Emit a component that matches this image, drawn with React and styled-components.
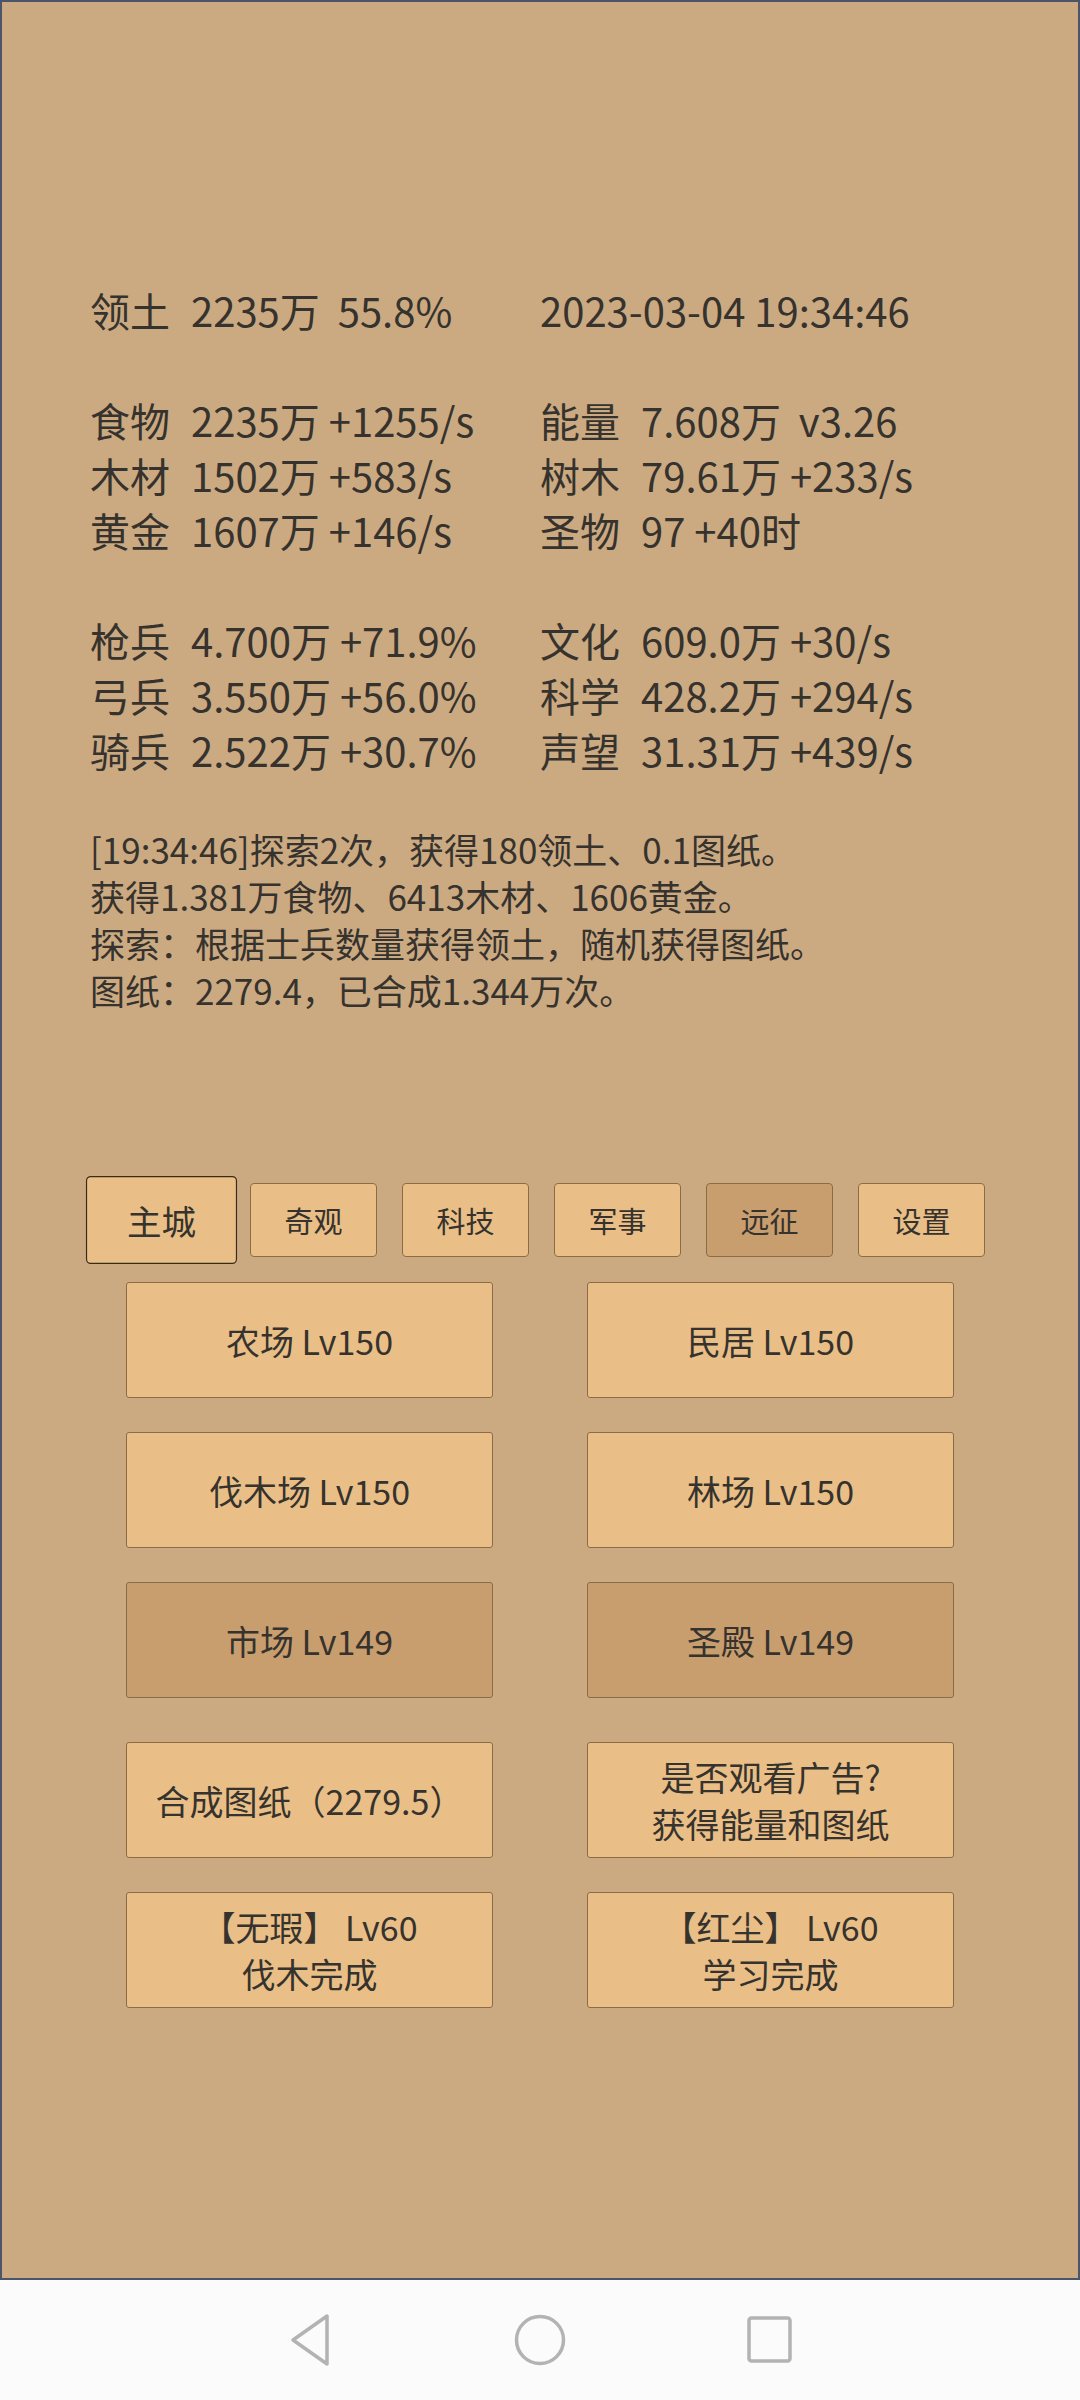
import React from 'react';
import styled, { createGlobalStyle } from 'styled-components';

const GlobalStyle = createGlobalStyle`
  html, body {
    margin: 0;
    padding: 0;
    background: #fbfbfb;
  }
  body {
    font-family: "Noto Sans CJK SC", "Noto Sans", sans-serif;
    color: #36322d;
  }
`;

const statRows = [
  [{ label: '领土', value: '2235万  55.8%' }, { value: '2023-03-04 19:34:46' }],
  null,
  [{ label: '食物', value: '2235万 +1255/s' }, { label: '能量', value: '7.608万  v3.26' }],
  [{ label: '木材', value: '1502万 +583/s' }, { label: '树木', value: '79.61万 +233/s' }],
  [{ label: '黄金', value: '1607万 +146/s' }, { label: '圣物', value: '97 +40时' }],
  null,
  [{ label: '枪兵', value: '4.700万 +71.9%' }, { label: '文化', value: '609.0万 +30/s' }],
  [{ label: '弓兵', value: '3.550万 +56.0%' }, { label: '科学', value: '428.2万 +294/s' }],
  [{ label: '骑兵', value: '2.522万 +30.7%' }, { label: '声望', value: '31.31万 +439/s' }],
];

const logLines = [
  '[19:34:46]探索2次，获得180领土、0.1图纸。',
  '获得1.381万食物、6413木材、1606黄金。',
  '探索：根据士兵数量获得领土，随机获得图纸。',
  '图纸：2279.4，已合成1.344万次。',
];

const tabs = [
  { name: '主城', active: true },
  { name: '奇观' },
  { name: '科技' },
  { name: '军事' },
  { name: '远征', dim: true },
  { name: '设置' },
];

const buildings = [
  { text: '农场 Lv150' },
  { text: '民居 Lv150' },
  { text: '伐木场 Lv150' },
  { text: '林场 Lv150' },
  { text: '市场 Lv149', dim: true },
  { text: '圣殿 Lv149', dim: true },
];

const actions = [
  { lines: ['合成图纸（2279.5）'] },
  { lines: ['是否观看广告?', '获得能量和图纸'] },
  { lines: ['【无瑕】 Lv60', '伐木完成'] },
  { lines: ['【红尘】 Lv60', '学习完成'] },
];

const App = () => {
  return (
    <>
      <GlobalStyle />
      <Screen>
        <Frame>
          <Stats>
            {statRows.map((row, i) =>
              row ? (
                row.map((cell, j) => (
                  <StatCell key={`${i}-${j}`}>
                    {cell.label && <Label>{cell.label}</Label>}
                    <Value>{cell.value}</Value>
                  </StatCell>
                ))
              ) : (
                <Blank key={i} />
              )
            )}
          </Stats>

          <Log>
            {logLines.map((line) => (
              <div key={line}>{line}</div>
            ))}
          </Log>

          <TabBar>
            {tabs.map((tab) => (
              <Tab key={tab.name} $active={tab.active} $dim={tab.dim}>
                {tab.name}
              </Tab>
            ))}
          </TabBar>

          <ButtonGrid>
            {buildings.map((b) => (
              <GameButton key={b.text} $dim={b.dim}>
                {b.text}
              </GameButton>
            ))}
          </ButtonGrid>

          <ButtonGrid $extra>
            {actions.map((a) => (
              <GameButton key={a.lines.join()}>
                {a.lines.map((l) => (
                  <span key={l}>{l}</span>
                ))}
              </GameButton>
            ))}
          </ButtonGrid>
        </Frame>

        <NavBar>
          <NavSlot>
            <svg width="46" height="56" viewBox="0 0 46 56">
              <path
                d="M40 4 L40 52 L6 28 Z"
                fill="none"
                stroke="#b3b3b3"
                strokeWidth="3.5"
                strokeLinejoin="round"
              />
            </svg>
          </NavSlot>
          <NavSlot>
            <svg width="54" height="54" viewBox="0 0 54 54">
              <circle cx="27" cy="27" r="23.5" fill="none" stroke="#b3b3b3" strokeWidth="3.5" />
            </svg>
          </NavSlot>
          <NavSlot>
            <svg width="48" height="50" viewBox="0 0 48 50">
              <rect x="3" y="3" width="41" height="43" rx="2.5" fill="none" stroke="#b3b3b3" strokeWidth="3.5" />
            </svg>
          </NavSlot>
        </NavBar>
      </Screen>
    </>
  );
};

export default App;

const Screen = styled.div`
  width: 1080px;
  height: 2400px;
  display: flex;
  flex-direction: column;
`;

const Frame = styled.div`
  box-sizing: border-box;
  height: 2280px;
  background: #cbaa82;
  border: 2px solid #4b5468;
  display: flex;
  flex-direction: column;
`;

const Stats = styled.div`
  display: grid;
  grid-template-columns: 450px 1fr;
  margin: 281px 0 0 88px;
  font-size: 40px;
  line-height: 55px;
`;

const StatCell = styled.div`
  display: flex;
  white-space: pre;
`;

const Blank = styled.div`
  grid-column: 1 / -1;
  height: 55px;
`;

const Label = styled.span`
  width: 80px;
  margin-right: 21px;
  flex-shrink: 0;
`;

const Value = styled.span``;

const Log = styled.div`
  margin: 47px 0 0 88px;
  font-size: 35px;
  line-height: 47px;
`;

const TabBar = styled.div`
  display: flex;
  align-items: center;
  gap: 25px;
  margin: 170px 0 0 96px;
`;

const Tab = styled.div`
  box-sizing: border-box;
  width: 127px;
  height: 74px;
  display: flex;
  align-items: center;
  justify-content: center;
  font-size: 29px;
  background: ${(p) => (p.$dim ? '#c99e6f' : '#e9bf87')};
  border: 1px solid ${(p) => (p.$active ? '#3a2b1a' : '#8c6c47')};
  border-radius: 4px;
  transform: ${(p) => (p.$active ? 'scale(1.19)' : 'none')};
`;

const ButtonGrid = styled.div`
  display: grid;
  grid-template-columns: 367px 367px;
  grid-auto-rows: 116px;
  column-gap: 94px;
  row-gap: 34px;
  margin: ${(p) => (p.$extra ? '44px' : '25px')} 0 0 124px;
`;

const GameButton = styled.div`
  box-sizing: border-box;
  display: flex;
  flex-direction: column;
  align-items: center;
  justify-content: center;
  font-size: 34px;
  line-height: 47px;
  background: ${(p) => (p.$dim ? '#c99e6f' : '#e9bf87')};
  border: 1px solid #8c6c47;
  border-radius: 3px;
  white-space: pre;
`;

const NavBar = styled.div`
  flex: 1;
  background: #fbfbfb;
  display: flex;
  align-items: center;
  justify-content: center;
  gap: 170px;
`;

const NavSlot = styled.div`
  width: 60px;
  display: flex;
  justify-content: center;
`;
